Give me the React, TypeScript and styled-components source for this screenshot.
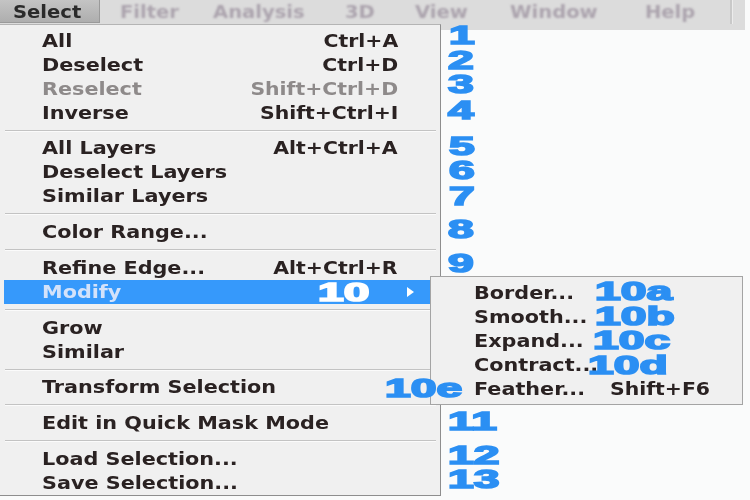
import React from 'react'
import styled, { createGlobalStyle } from 'styled-components'

const GlobalStyle = createGlobalStyle`
  html, body {
    margin: 0;
    padding: 0;
    background: #fafbfb;
  }
  body {
    font-family: "DejaVu Sans", "Liberation Sans", sans-serif;
  }
`

const Screen = styled.div`
  position: relative;
  width: 750px;
  height: 500px;
  overflow: hidden;
  background: #fafbfb;
`

// ---- top menu bar ----
const MenuBar = styled.div`
  display: flex;
  align-items: flex-start;
  width: 745px;
  height: 30px;
  background: #dcdcdc;
`

const BarItem = styled.div<{ $w: number; $pad?: number; $active?: boolean }>`
  box-sizing: border-box;
  width: ${p => p.$w}px;
  height: 23px;
  padding-left: ${p => p.$pad || 0}px;
  line-height: 24px;
  font-size: 17px;
  font-weight: bold;
  white-space: nowrap;
  color: ${p => (p.$active ? '#2a2a2a' : '#aca4ae')};
  background: ${p => (p.$active ? 'linear-gradient(#c4c4c4, #aeaeae)' : 'transparent')};
  border-right: ${p => (p.$active ? '1px solid #9a9a9a' : 'none')};
  border-bottom: ${p => (p.$active ? '1px solid #9a9a9a' : 'none')};
  filter: ${p => (p.$active ? 'none' : 'blur(1px)')};

  span {
    display: inline-block;
    transform: scaleX(1.15);
    transform-origin: left center;
  }
`

const BarDivider = styled.div`
  width: 2px;
  height: 24px;
  background: #c9c9c9;
  border-right: 1px solid #ececec;
`

// ---- dropdown menu ----
const Dropdown = styled.div`
  position: absolute;
  top: 24px;
  left: 0;
  width: 441px;
  height: 472px;
  box-sizing: border-box;
  padding: 4px 10px 0 4px;
  background: #f0f0f0;
  border-right: 1px solid #8e8e8e;
  border-bottom: 1px solid #8e8e8e;
  border-top: 1px solid #b4b4b4;
  display: flex;
  flex-direction: column;
  z-index: 2;
`

const Row = styled.div<{ $hot?: boolean; $dim?: boolean }>`
  display: flex;
  align-items: center;
  justify-content: space-between;
  height: 24px;
  padding: 0 32px 0 38px;
  font-size: 17px;
  font-weight: bold;
  white-space: nowrap;
  color: ${p => (p.$hot ? '#d3e2fa' : p.$dim ? '#8e8a8a' : '#2a2222')};
  background: ${p => (p.$hot ? '#3699fb' : 'transparent')};
`

const Label = styled.span`
  display: inline-block;
  transform: scaleX(1.22);
  transform-origin: left center;
`

const Keys = styled.span`
  display: inline-block;
  transform: scaleX(1.2);
  transform-origin: right center;
`

const Arrow = styled.span`
  width: 0;
  height: 0;
  margin-right: -16px;
  border-left: 7px solid #ffffff;
  border-top: 5px solid transparent;
  border-bottom: 5px solid transparent;
`

const Separator = styled.div`
  height: 1px;
  margin: 5px -6px 5px 1px;
  background: #c3c3c3;
  border-bottom: 1px solid #fbfbfb;
`

// ---- Modify submenu ----
const Submenu = styled.div`
  position: absolute;
  top: 276px;
  left: 430px;
  width: 313px;
  height: 129px;
  box-sizing: border-box;
  padding: 4px 0 0;
  background: #f0f0f0;
  border: 1px solid #a4a4a4;
  z-index: 3;
`

const SubRow = styled.div`
  display: grid;
  grid-template-columns: 136px auto;
  align-items: center;
  height: 24px;
  padding-left: 43px;
  font-size: 17px;
  font-weight: bold;
  white-space: nowrap;
  color: #2a2222;
`

const SubKeys = styled.span`
  display: inline-block;
  transform: scaleX(1.2);
  transform-origin: left center;
`

// ---- blue step numbers ----
const Step = styled.span<{ $x: number; $y: number; $white?: boolean }>`
  position: absolute;
  left: ${p => p.$x}px;
  top: ${p => p.$y - 12}px;
  font-family: "Liberation Sans", Arial, sans-serif;
  font-size: 25px;
  font-weight: bold;
  line-height: 25px;
  white-space: nowrap;
  color: ${p => (p.$white ? '#ffffff' : '#2b8ff3')};
  -webkit-text-stroke: 1.6px ${p => (p.$white ? '#ffffff' : '#2b8ff3')};
  transform: scaleX(1.85);
  transform-origin: left center;
  z-index: 5;
`

type Item =
  | { sep: true }
  | { label: string; keys?: string; dim?: boolean; hot?: boolean; sub?: boolean }

const items: Item[] = [
  { label: 'All', keys: 'Ctrl+A' },
  { label: 'Deselect', keys: 'Ctrl+D' },
  { label: 'Reselect', keys: 'Shift+Ctrl+D', dim: true },
  { label: 'Inverse', keys: 'Shift+Ctrl+I' },
  { sep: true },
  { label: 'All Layers', keys: 'Alt+Ctrl+A' },
  { label: 'Deselect Layers' },
  { label: 'Similar Layers' },
  { sep: true },
  { label: 'Color Range...' },
  { sep: true },
  { label: 'Refine Edge...', keys: 'Alt+Ctrl+R' },
  { label: 'Modify', hot: true, sub: true },
  { sep: true },
  { label: 'Grow' },
  { label: 'Similar' },
  { sep: true },
  { label: 'Transform Selection' },
  { sep: true },
  { label: 'Edit in Quick Mask Mode' },
  { sep: true },
  { label: 'Load Selection...' },
  { label: 'Save Selection...' },
]

const subItems = [
  { label: 'Border...' },
  { label: 'Smooth...' },
  { label: 'Expand...' },
  { label: 'Contract...' },
  { label: 'Feather...', keys: 'Shift+F6' },
]

const steps: [string, number, number, boolean?][] = [
  ['1', 449, 35],
  ['2', 448, 60],
  ['3', 448, 84],
  ['4', 448, 110],
  ['5', 449, 146],
  ['6', 449, 170],
  ['7', 449, 196],
  ['8', 448, 229],
  ['9', 448, 263],
  ['10', 318, 292, true],
  ['10a', 595, 291],
  ['10b', 595, 316],
  ['10c', 593, 340],
  ['10d', 588, 365],
  ['10e', 385, 388],
  ['11', 448, 421],
  ['12', 448, 455],
  ['13', 448, 479],
]

const barItems: [string, number, number][] = [
  ['Filter', 113, 20],
  ['Analysis', 132, 0],
  ['3D', 70, 0],
  ['View', 95, 0],
  ['Window', 135, 0],
  ['Help', 85, 0],
]

export default function App() {
  return (
    <Screen>
      <GlobalStyle />
      <MenuBar>
        <BarItem $w={100} $pad={13} $active>
          <span>Select</span>
        </BarItem>
        {barItems.map(([name, w, pad]) => (
          <BarItem key={name} $w={w} $pad={pad}>
            <span>{name}</span>
          </BarItem>
        ))}
        <BarDivider />
      </MenuBar>

      <Dropdown>
        {items.map((it, i) =>
          'sep' in it ? (
            <Separator key={i} />
          ) : (
            <Row key={i} $hot={it.hot} $dim={it.dim}>
              <Label>{it.label}</Label>
              {it.sub ? <Arrow /> : it.keys ? <Keys>{it.keys}</Keys> : null}
            </Row>
          )
        )}
      </Dropdown>

      <Submenu>
        {subItems.map(s => (
          <SubRow key={s.label}>
            <Label>{s.label}</Label>
            {s.keys ? <SubKeys>{s.keys}</SubKeys> : <span />}
          </SubRow>
        ))}
      </Submenu>

      {steps.map(([text, x, y, white]) => (
        <Step key={text} $x={x} $y={y} $white={white}>
          {text}
        </Step>
      ))}
    </Screen>
  )
}
